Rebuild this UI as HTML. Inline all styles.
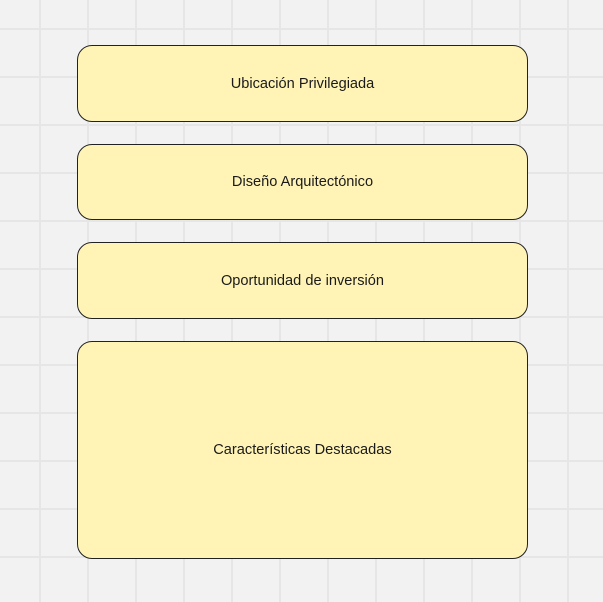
<!DOCTYPE html>
<html><head><style>
html,body{margin:0;padding:0}
body{width:603px;height:602px;overflow:hidden;position:relative;background-color:#f2f2f2;
background-image:linear-gradient(to right,#e6e6e6 2px,transparent 2px),linear-gradient(to bottom,#e6e6e6 2px,transparent 2px);
background-size:48px 48px;background-position:39px 28px;font-family:"Liberation Sans","DejaVu Sans",sans-serif}
.b{position:absolute;left:77px;width:449px;background:#fff4b5;border:1.5px solid #222;border-radius:15px;
display:flex;align-items:center;justify-content:center;font-size:14.6px;color:#1a1a1a}
</style></head><body>
<div class="b" style="top:45px;height:75px">Ubicación Privilegiada</div>
<div class="b" style="top:144px;height:74px">Diseño Arquitectónico</div>
<div class="b" style="top:242px;height:75px">Oportunidad de inversión</div>
<div class="b" style="top:341px;height:216px">Características Destacadas</div>
</body></html>
